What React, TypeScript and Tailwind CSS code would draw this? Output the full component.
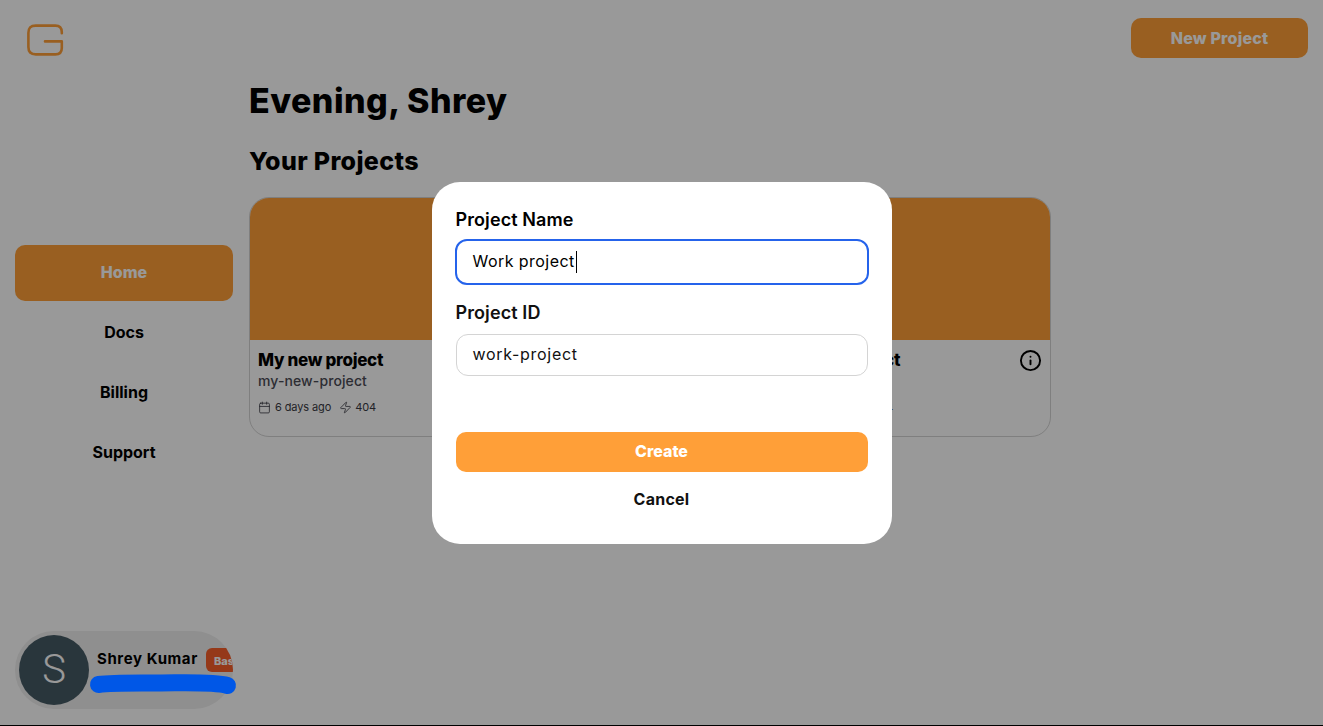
import { Calendar, Info, Zap } from "lucide-react";

const navItems = ["Home", "Docs", "Billing", "Support"];

function Logo() {
  return (
    <svg width="38" height="32" viewBox="0 0 38 32" fill="none" className="ml-[11px]">
      <path
        d="M35.8 9.2V8.2C35.8 3.8 33.6 1.6 29.4 1.6H9.8C4.6 1.6 2.4 3.8 2.4 9V23C2.4 28.2 4.6 30.4 9.8 30.4H29.4C33.6 30.4 35.8 28.2 35.8 24V17.4H19"
        stroke="#FF9F38"
        strokeWidth="2.6"
        strokeLinecap="round"
        strokeLinejoin="round"
      />
    </svg>
  );
}

function ProjectCard({ showInfo }: { showInfo?: boolean }) {
  return (
    <div className="w-[285px] h-[240px] rounded-[20px] border border-[#d4d4d4] overflow-hidden bg-white">
      <div className="h-[142px] bg-[#FF9F38]" />
      <div className="px-2 pt-[9px]">
        <div className="flex items-start justify-between">
          <p className="text-[17px] leading-[22px] font-extrabold tracking-[-0.3px] text-black">My new project</p>
          {showInfo && <Info size={23} strokeWidth={2} className="text-black mr-[-1px] -translate-x-[1px]" />}
        </div>
        <p className="text-[14px] leading-[20px] font-medium tracking-[0.1px] text-[#4b4b55]">my-new-project</p>
        <div className="mt-[8px] flex items-center text-[11px] leading-[16px] text-[#3a3a44]">
          <Calendar size={13} strokeWidth={1.5} />
          <span className="ml-[4px] tracking-[-0.1px]">6 days ago</span>
          <Zap size={13} strokeWidth={1.5} className="ml-[8px]" />
          <span className="ml-[3px] tracking-[-0.2px]">404</span>
        </div>
      </div>
    </div>
  );
}

function Modal() {
  return (
    <div className="w-[460px] h-[362px] rounded-[28px] bg-white px-6 pt-[26px]">
      <p className="text-[18px] leading-[24px] font-semibold tracking-[0.1px] text-black">Project Name</p>
      <div className="mt-[7px] -mx-px h-[46px] rounded-[12px] border-2 border-[#2563eb] flex items-center pl-[16px] pb-[2px] text-[16px] tracking-[0.45px] text-black">
        Work project
        <span className="ml-px w-px h-[22px] bg-black translate-y-px" />
      </div>
      <p className="mt-[16px] text-[18px] leading-[24px] font-semibold tracking-[0.1px] text-[#111]">Project ID</p>
      <div className="mt-[9px] h-[42px] rounded-[12px] border border-[#d4d4d4] flex items-center pl-[16px] pb-[2px] text-[16px] tracking-[0.7px] text-[#111]">
        work-project
      </div>
      <button className="mt-[56px] w-full h-10 rounded-[10px] bg-[#FF9F38] text-white text-[16px] font-extrabold pb-[2px]">
        Create
      </button>
      <button className="mt-[16px] w-full h-[22px] text-[#111] text-[16px] leading-[20px] font-bold tracking-[0.25px]">
        Cancel
      </button>
    </div>
  );
}

export default function App() {
  return (
    <div className="h-[726px] w-[1323px] overflow-hidden bg-white font-['Inter',sans-serif]">
      <div className="relative h-[725px] flex">
        {/* Sidebar */}
        <aside className="w-[249px] pl-[15px] pr-[16px] flex flex-col">
          <div className="pt-[24px]">
            <Logo />
          </div>
          <nav className="mt-[189px] flex flex-col gap-1">
            {navItems.map((item, i) => (
              <a
                key={item}
                href="#"
                className={
                  i === 0
                    ? "h-14 rounded-[10px] bg-[#FF9F38] text-white flex items-center justify-center pb-[2px] text-[16px] font-extrabold"
                    : "h-14 rounded-[10px] text-black flex items-center justify-center pb-[2px] text-[16px] font-bold"
                }
              >
                {item}
              </a>
            ))}
          </nav>
          <div className="mt-auto mb-[16px] h-[78px] rounded-full bg-[#eeeeee] overflow-hidden flex items-start pl-[4px] pt-[4px]">
            <div className="w-[70px] h-[70px] shrink-0 rounded-full bg-[#455a64] text-white flex items-center justify-center text-[40px] font-light font-['Roboto',sans-serif]">
              S
            </div>
            <div className="ml-[8px] mt-[13px] flex items-center">
              <span className="text-[15px] leading-[22px] font-bold tracking-[0.6px] text-black whitespace-nowrap -translate-y-[1px]">
                Shrey Kumar
              </span>
              <span className="ml-[8px] w-[40px] h-[24px] shrink-0 rounded-[6px] bg-[#f8602b] text-white text-[11px] font-extrabold pl-[8px] pt-[6px] leading-[14px]">
                Basic
              </span>
            </div>
          </div>
        </aside>

        {/* Main */}
        <main className="flex-1 pr-[15px] pt-[18px]">
          <div className="flex justify-end">
            <button className="w-[177px] h-10 rounded-[10px] bg-[#FF9F38] text-white text-[16px] font-extrabold tracking-[0.2px] pb-[1px]">
              New Project
            </button>
          </div>
          <h1 className="mt-[19px] text-[34px] leading-[48px] font-extrabold tracking-[0.45px] text-black">Evening, Shrey</h1>
          <h2 className="mt-[18px] text-[25px] leading-[36px] font-extrabold tracking-[0.35px] text-black">Your Projects</h2>
          <div className="mt-[18px] w-[802px] flex justify-between">
            <ProjectCard />
            <ProjectCard showInfo />
          </div>
        </main>

        {/* Dialog backdrop */}
        <div className="absolute inset-0 bg-black/40 flex items-center justify-center">
          <Modal />
        </div>

        {/* Blue scribble drawn over the email */}
        <svg width="150" height="28" viewBox="0 0 150 28" fill="none" className="absolute left-[88px] top-[670px]">
          <path
            d="M10.5 14.5C25 12.5 50 13 70 13C95 13 125 11.5 139.5 15.5"
            stroke="#0057e7"
            strokeWidth="17"
            strokeLinecap="round"
          />
        </svg>
      </div>
      <div className="h-px bg-black" />
    </div>
  );
}
